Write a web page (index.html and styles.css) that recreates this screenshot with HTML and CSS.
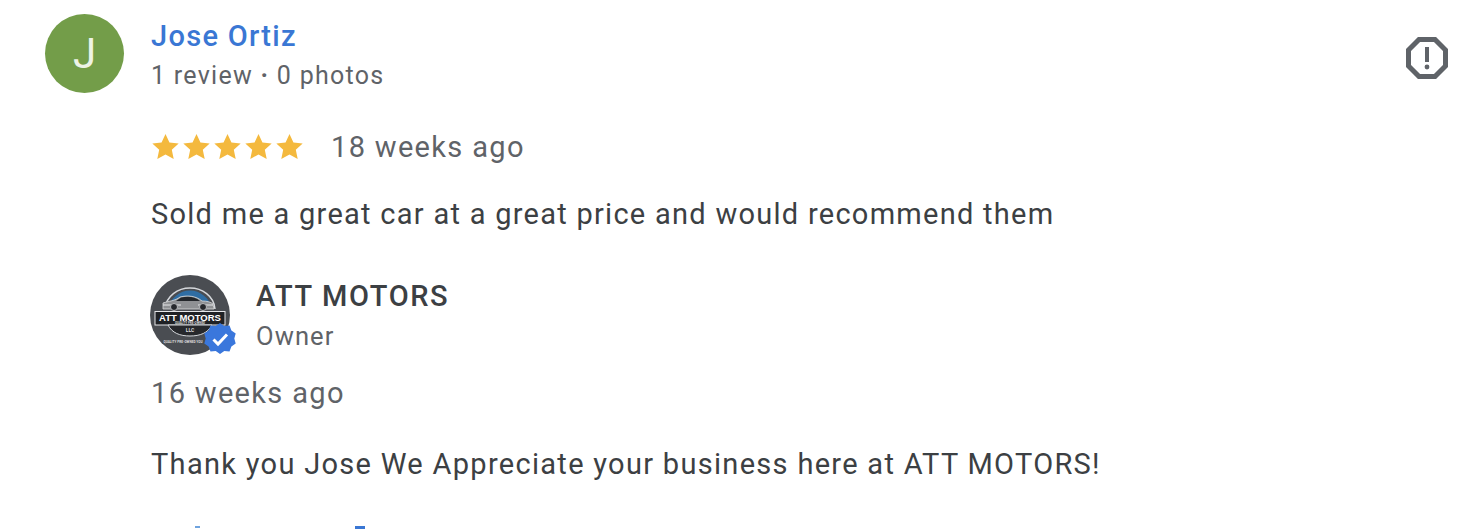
FILE: index.html
```html
<!DOCTYPE html>
<html lang="en">
<head>
<meta charset="utf-8">
<title>Review</title>
<link rel="stylesheet" href="styles.css">
</head>
<body>
<main class="review">
  <div class="avatar">J</div>
  <div class="content">
    <header class="author">
      <div>
        <a class="name">Jose Ortiz</a>
        <div class="meta">1 review <span class="dot">·</span> 0 photos</div>
      </div>
      <svg class="flag" viewBox="0 0 42 42"><path d="M13 2.500h16L39.500 13v16L29 39.500H13L2.500 29V13z" fill="none" stroke="#5f6368" stroke-width="5"/><rect x="19" y="10" width="4" height="15" fill="#5f6368"/><circle cx="21" cy="30" r="2.400" fill="#5f6368"/></svg>
    </header>
    <div class="rating">
      <div class="stars">
        <svg viewBox="0 0 24 24"><path d="M12 .8l3.500 7.600 8.200.9-6.100 5.600 1.700 8.200L12 19l-7.300 4.100 1.700-8.200L.3 9.300l8.200-.9z"/></svg>
        <svg viewBox="0 0 24 24"><path d="M12 .8l3.500 7.600 8.200.9-6.100 5.600 1.700 8.200L12 19l-7.300 4.100 1.700-8.200L.3 9.300l8.200-.9z"/></svg>
        <svg viewBox="0 0 24 24"><path d="M12 .8l3.500 7.600 8.200.9-6.100 5.600 1.700 8.200L12 19l-7.300 4.100 1.700-8.200L.3 9.300l8.200-.9z"/></svg>
        <svg viewBox="0 0 24 24"><path d="M12 .8l3.500 7.600 8.200.9-6.100 5.600 1.700 8.200L12 19l-7.300 4.100 1.700-8.200L.3 9.300l8.200-.9z"/></svg>
        <svg viewBox="0 0 24 24"><path d="M12 .8l3.500 7.600 8.200.9-6.100 5.600 1.700 8.200L12 19l-7.300 4.100 1.700-8.200L.3 9.300l8.200-.9z"/></svg>
      </div>
      <span class="ago">18 weeks ago</span>
    </div>
    <p class="text first">Sold me a great car at a great price and would recommend them</p>
    <div class="owner">
      <div class="logo">
        <svg viewBox="0 0 80 80">
          <circle cx="40" cy="40" r="40" fill="#4a4d52"/>
          <path d="M15 34C16 21 28 13 40 13s24 8 25 21" fill="none" stroke="#d5d8dc" stroke-width="1.500"/>
          <path d="M18 34C20 23 30 15.500 40 15.500S60 23 62 34z" fill="#2f6da3"/>
          <path d="M13 28c6-2 12-2 17-6 8-2 16-1 22 4 5 0 9 1 11 3l1 5H13z" fill="#8f9194" stroke="#d9dadc" stroke-width=".8"/>
          <path d="M31 22.500c7-1.500 14-1 19 3.500H26z" fill="#23262a"/>
          <path d="M13 30h18M48 30h15" stroke="#e6e7e9" stroke-width="1"/>
          <circle cx="24" cy="32" r="3.500" fill="#26282c" stroke="#b8babd"/><circle cx="53" cy="32" r="3.500" fill="#26282c" stroke="#b8babd"/>
          <rect x="5" y="36.500" width="70" height="13.500" fill="#1f2125" stroke="#e6e7e9" stroke-width="1"/>
          <text x="40" y="45.500" class="logo-title">ATT MOTORS</text>
          <text x="40" y="49.400" class="logo-sub">QUALITY PRE-OWNED</text>
          <path d="M18 50c4 8 12 11 22 11s18-3 22-11z" fill="#26282c" stroke="#d5d8dc" stroke-width="1"/>
          <text x="40" y="57" class="logo-llc">LLC</text>
          <text x="33" y="68" class="logo-foot">QUALITY PRE-OWNED YOU</text>
        </svg>
        <svg class="badge" viewBox="0 0 32 32"><path d="M16 0l4.300 3 5.200-.4 1.900 4.900 4.300 3-1.400 5 1.400 5-4.300 3-1.900 4.900-5.200-.4-4.300 3-4.300-3-5.200.4-1.900-4.900-4.300-3 1.400-5-1.400-5 4.300-3 1.900-4.900 5.200.4z" fill="#3a77dc"/><path d="M9.500 16.500l4.500 4.500 9-9.500" fill="none" stroke="#fff" stroke-width="3"/></svg>
      </div>
      <div>
        <div class="owner-name">ATT MOTORS</div>
        <div class="owner-role">Owner</div>
      </div>
    </div>
    <div class="ago reply-ago">16 weeks ago</div>
    <p class="text reply">Thank you Jose We Appreciate your business here at ATT MOTORS!</p>
    <div class="links"><span class="mark-a"></span><span class="mark-b"></span></div>
  </div>
</main>
</body>
</html>
```
FILE: styles.css
```css
html, body { margin: 0; height: 530px; overflow: hidden; background: #fff; }
body { font-family: Roboto, "Liberation Sans", sans-serif; color: #3c4043; }
.review { display: flex; padding: 14px 30px 0 45px; gap: 27px; }
.avatar { width: 79px; height: 79px; flex: none; border-radius: 50%; background: #739d49; color: #edf3e6; font-size: 42px; display: flex; align-items: center; justify-content: center; }
.content { flex: 1; }
.author { display: flex; justify-content: space-between; align-items: flex-start; height: 79px; }
.name { display: block; color: #3a77d4; font-size: 29px; font-weight: 500; line-height: 44px; letter-spacing: 1.3px; }
.meta { color: #5f6368; font-size: 25px; line-height: 36px; letter-spacing: 1.28px; }
.dot { font-weight: 700; }
.flag { width: 42px; height: 42px; margin-top: 23px; }
.rating { display: flex; align-items: center; margin-top: 34px; height: 40px; }
.stars { display: flex; gap: 4px; width: 179px; margin: -2px 0 0 1px; }
.stars svg { width: 27px; height: 27px; fill: #f4b93e; }
.ago { color: #5f6368; font-size: 29px; letter-spacing: 1.33px; line-height: 40px; }
.text { margin: 0; font-size: 29px; line-height: 40px; letter-spacing: 1.3px; color: #3c4043; }
.first { margin-top: 27px; letter-spacing: 1.27px; }
.owner { display: flex; align-items: center; gap: 26px; margin: 41px 0 0 -1px; }
.logo { position: relative; width: 80px; height: 80px; flex: none; }
.logo > svg:first-child { display: block; width: 80px; height: 80px; }
.badge { position: absolute; right: -6px; bottom: 0; width: 32px; height: 32px; }
.logo-title { font-size: 9.500px; font-weight: 700; fill: #fff; text-anchor: middle; font-family: "Liberation Sans", sans-serif; }
.logo-sub { font-size: 3px; fill: #ddd; text-anchor: middle; font-weight: 700; }
.logo-llc { font-size: 5px; fill: #ddd; text-anchor: middle; font-weight: 700; }
.logo-foot { font-size: 3.200px; fill: #ddd; text-anchor: middle; font-weight: 700; }
.owner-name { font-size: 29px; font-weight: 500; line-height: 42px; letter-spacing: 1.6px; color: #3c4043; }
.owner-role { font-size: 25.500px; line-height: 38px; letter-spacing: 1.1px; color: #5f6368; }
.reply-ago { margin-top: 18px; }
.reply { margin-top: 31px; }
.links { display: flex; margin-top: 42px; height: 3px; }
.mark-a { width: 5px; height: 2px; margin-left: 44px; background: #6fa3de; }
.mark-b { width: 10px; height: 3px; margin-left: 155px; background: #3a77d4; }
```
